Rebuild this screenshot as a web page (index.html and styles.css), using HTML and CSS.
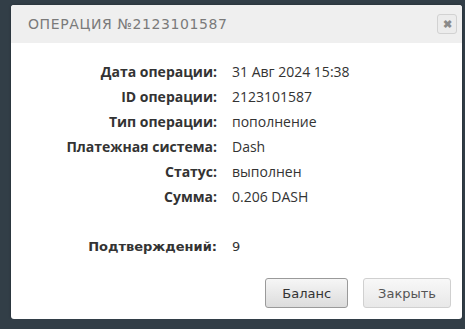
FILE: index.html
```html
<!DOCTYPE html>
<html lang="ru">
<head>
    <meta charset="UTF-8">
    <meta name="viewport" content="width=device-width, initial-scale=1.0">
    <title>Операция</title>
    <link rel="stylesheet" href="styles.css">
</head>
<body>
    <div class="dialog">
        <div class="dialog-header">
            <p class="dialog-title">Операция №2123101587</p>
            <button class="close-button">&#10006;</button>
        </div>

        <div class="dialog-body">
            <div class="info">
                <span class="label">Дата операции:</span>
                <span class="value">31 Авг 2024 15:38</span>

                <span class="label">ID операции:</span>
                <span class="value">2123101587</span>

                <span class="label">Тип операции:</span>
                <span class="value">пополнение</span>

                <span class="label">Платежная система:</span>
                <span class="value">Dash</span>

                <span class="label">Статус:</span>
                <span class="value">выполнен</span>

                <span class="label">Сумма:</span>
                <span class="value">0.206 DASH</span>

                <span class="spacer"></span>

                <span class="label label-alt">Подтверждений:</span>
                <span class="value value-alt">9</span>
            </div>
        </div>

        <div class="dialog-footer">
            <button class="dialog-button">Баланс</button>
            <button class="dialog-button dialog-button-light">Закрыть</button>
        </div>
    </div>
</body>
</html>
```

FILE: styles.css
```css
body{
    margin: 0;
    background-color: rgb(50, 62, 71);
    font-family: "Open Sans", Arial, sans-serif;
    color: #333;
}

.dialog{
    margin: 5px 0 0 11px;
    width: 451px;
    height: 314px;
    background-color: white;
    border-radius: 3px;
    display: flex;
    flex-direction: column;
    box-shadow: 0 0 3px rgba(0, 0, 0, 0.3);
}

.dialog-header{
    height: 38px;
    background-color: #efefef;
    border-radius: 3px 3px 0 0;
    display: flex;
    align-items: center;
    justify-content: space-between;
    padding: 0 5px 0 17px;
}
.dialog-title{
    margin: 0;
    font-family: "DejaVu Sans", sans-serif;
    font-size: 14px;
    text-transform: uppercase;
    letter-spacing: 0.6px;
    color: #7a7a7a;
}
.close-button{
    width: 20px;
    height: 20px;
    padding: 0;
    border: 1px solid #d2d2d2;
    border-radius: 3px;
    background-color: #ececec;
    color: #8a8a8a;
    font-size: 11px;
    font-weight: bold;
    line-height: 18px;
    cursor: pointer;
}

.dialog-body{
    flex: 1;
    padding-top: 16px;
}
.info{
    display: grid;
    grid-template-columns: 206px auto;
    column-gap: 15px;
    font-size: 14px;
    line-height: 25px;
}
.label{
    text-align: right;
    font-weight: bold;
}
.spacer{
    grid-column: 1 / 3;
    height: 25px;
}
.label-alt, .value-alt{
    font-family: "DejaVu Sans", Verdana, sans-serif;
    font-size: 13px;
}

.dialog-footer{
    display: flex;
    justify-content: flex-end;
    gap: 15px;
    padding: 0 11px 11px 0;
}
.dialog-button{
    height: 30px;
    padding: 0 16px;
    border: 1px solid #9a9a9a;
    border-radius: 3px;
    background: linear-gradient(#f6f6f6, #dcdcdc);
    font-family: "DejaVu Sans", Verdana, sans-serif;
    font-size: 13px;
    color: #333;
    cursor: pointer;
}
.dialog-button-light{
    padding: 0 14px;
    border-color: #d0d0d0;
    background: linear-gradient(#f8f8f8, #e8e8e8);
    color: #555;
}
```
